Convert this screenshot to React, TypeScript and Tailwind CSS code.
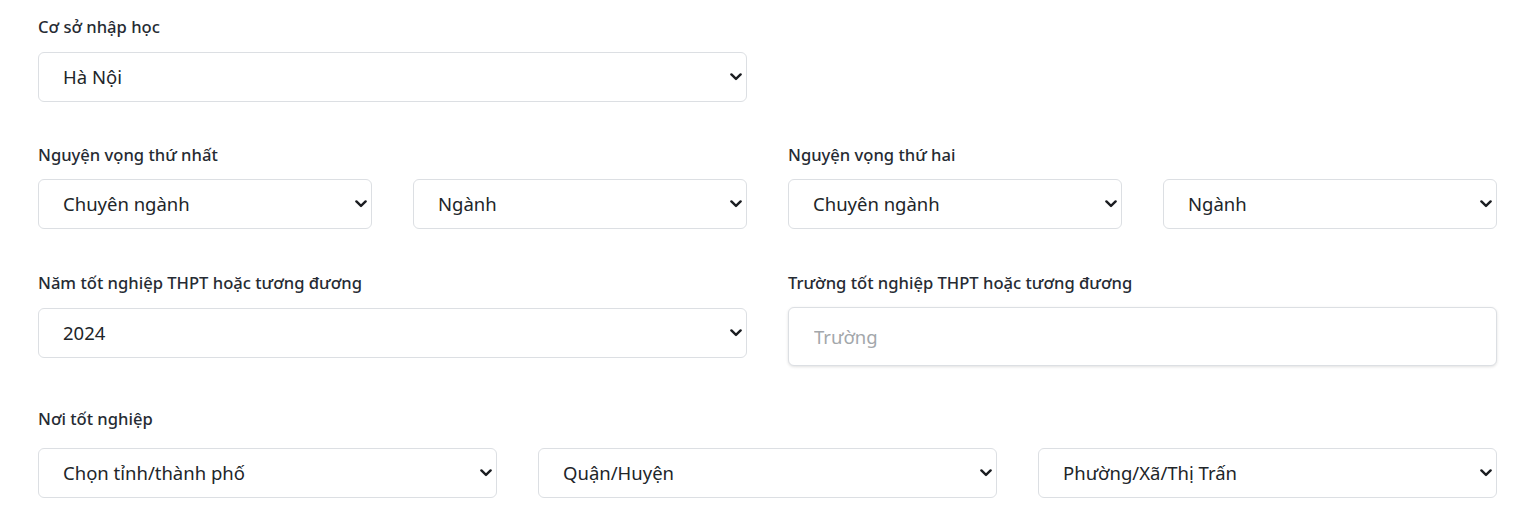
import type { ReactNode } from "react";

function Chevron() {
  return (
    <svg
      className="pointer-events-none absolute right-[5px] top-1/2 -translate-y-1/2"
      width="12"
      height="8"
      viewBox="0 0 12 8"
      fill="none"
    >
      <path d="M1.4 1.4 L6 5.9 L10.6 1.4" stroke="#1b1d21" strokeWidth="2.4" strokeLinecap="round" strokeLinejoin="round" />
    </svg>
  );
}

function Select({ value }: { value: string }) {
  return (
    <div className="relative">
      <select className="block h-[50px] w-full appearance-none rounded-md border border-[#dcdfe3] bg-white pl-6 pr-8 text-[18.5px] text-[#212529] outline-none">
        <option>{value}</option>
      </select>
      <Chevron />
    </div>
  );
}

function Label({ children, className = "" }: { children: ReactNode; className?: string }) {
  return <div className={`h-6 text-[16.6px] font-medium leading-6 text-[#262b33] ${className}`}>{children}</div>;
}

export default function App() {
  return (
    <div className="min-h-screen bg-white font-['Noto_Sans',sans-serif]">
      <div className="ml-[38px] w-[1459px] pt-[15px]">
        <div className="grid grid-cols-2 gap-x-[41px]">
          <div>
            <Label className="mb-[13px]">Cơ sở nhập học</Label>
            <Select value="Hà Nội" />
          </div>
        </div>

        <div className="mt-[41px] grid grid-cols-2 gap-x-[41px]">
          <div>
            <Label className="mb-3">Nguyện vọng thứ nhất</Label>
            <div className="grid grid-cols-2 gap-x-[41px]">
              <Select value="Chuyên ngành" />
              <Select value="Ngành" />
            </div>
          </div>
          <div>
            <Label className="mb-3">Nguyện vọng thứ hai</Label>
            <div className="grid grid-cols-2 gap-x-[41px]">
              <Select value="Chuyên ngành" />
              <Select value="Ngành" />
            </div>
          </div>
        </div>

        <div className="mt-[42px] grid grid-cols-2 items-start gap-x-[41px]">
          <div>
            <Label className="mb-[13px]">Năm tốt nghiệp THPT hoặc tương đương</Label>
            <Select value="2024" />
          </div>
          <div>
            <Label className="mb-3">Trường tốt nghiệp THPT hoặc tương đương</Label>
            <input
              type="text"
              placeholder="Trường"
              className="block h-[59px] w-full rounded-md border border-[#dcdfe3] bg-white px-[25px] text-[18.5px] text-[#212529] shadow-[0_1px_3px_rgba(0,0,0,0.12)] outline-none placeholder:text-[#a3a7ab]"
            />
          </div>
        </div>

        <div className="mt-[41px]">
          <Label className="mb-[17px] text-[#111]">Nơi tốt nghiệp</Label>
          <div className="grid grid-cols-3 gap-x-[41px]">
            <Select value="Chọn tỉnh/thành phố" />
            <Select value="Quận/Huyện" />
            <Select value="Phường/Xã/Thị Trấn" />
          </div>
        </div>
      </div>
    </div>
  );
}
